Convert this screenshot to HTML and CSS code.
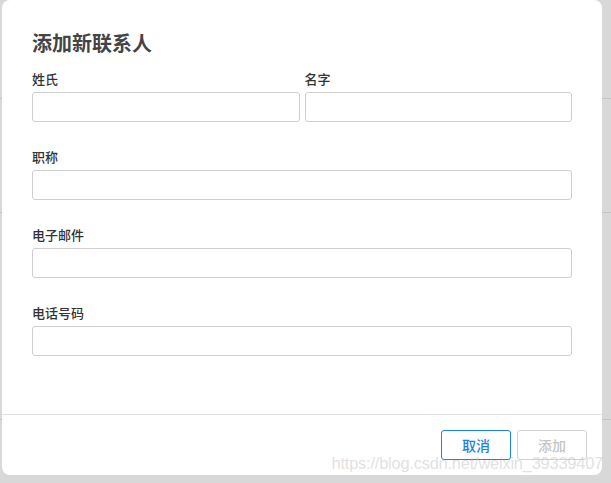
FILE: index.html
```html
<!DOCTYPE html>
<html lang="zh">
<head>
<meta charset="utf-8">
<link rel="stylesheet" href="styles.css">
</head>
<body>
<div class="backdrop">
  <div class="bg-row r1"></div>
  <div class="bg-row r2"></div>
  <div class="bg-row r3"></div>
</div>
<div class="modal">
  <div class="modal-body">
    <h2 class="title">添加新联系人</h2>
    <div class="row">
      <div class="field">
        <label class="label">姓氏</label>
        <input class="input" type="text">
      </div>
      <div class="field">
        <label class="label">名字</label>
        <input class="input" type="text">
      </div>
    </div>
    <div class="field group">
      <label class="label">职称</label>
      <input class="input" type="text">
    </div>
    <div class="field group">
      <label class="label">电子邮件</label>
      <input class="input" type="text">
    </div>
    <div class="field group">
      <label class="label">电话号码</label>
      <input class="input" type="text">
    </div>
  </div>
  <div class="modal-footer">
    <button class="btn btn-primary">取消</button>
    <button class="btn btn-disabled" disabled>添加</button>
  </div>
</div>
<div class="watermark">https://blog.csdn.net/weixin_39339407</div>
</body>
</html>
```
FILE: styles.css
```css
* { box-sizing: border-box; }
html, body {
  margin: 0;
  padding: 0;
  width: 611px;
  height: 483px;
  overflow: hidden;
  background: #d8d8d8;
  font-family: "Noto Sans CJK SC", "Noto Sans", sans-serif;
}
.backdrop {
  display: flex;
  flex-direction: column;
}
.bg-row { border-bottom: 1px solid #c4c4c4; }
.r1 { height: 99px; }
.r2 { height: 114px; }
.r3 { height: 207px; }

.modal {
  position: absolute;
  left: 2px;
  top: 0;
  width: 600px;
  height: 475px;
  background: #fff;
  border-radius: 8px;
  display: flex;
  flex-direction: column;
}
.modal-body {
  height: 414px;
  padding: 31px 30px 0 30px;
}
.title {
  margin: 0 0 17px 0;
  font-size: 20px;
  line-height: 24px;
  font-weight: 700;
  color: #444;
}
.row {
  display: flex;
  gap: 5px;
  margin-bottom: 28px;
}
.row .field { flex: 1; }
.field {
  display: flex;
  flex-direction: column;
}
.group { margin-bottom: 28px; }
.label {
  font-size: 13px;
  line-height: 14px;
  font-weight: 500;
  color: #333;
  margin-bottom: 6px;
}
.input {
  height: 30px;
  border: 1px solid #cfcfcf;
  border-radius: 3px;
  background: #fff;
  outline: none;
  padding: 0 8px;
  width: 100%;
}
.modal-footer {
  border-top: 1px solid #e2e2e2;
  height: 61px;
  display: flex;
  justify-content: flex-end;
  gap: 6px;
  padding: 15px 15px 0 0;
}
.btn {
  width: 70px;
  height: 30px;
  border-radius: 3px;
  background: #fff;
  font-family: "Noto Sans CJK SC", sans-serif;
  font-size: 14px;
  font-weight: 500;
  padding: 0;
}
.btn-primary {
  border: 1px solid #1a82f5;
  color: #1a7ff0;
}
.btn-disabled {
  border: 1px solid #d2d2d2;
  color: #c4c4c4;
}
.watermark {
  position: absolute;
  right: 8px;
  top: 453px;
  font-family: "Liberation Sans", sans-serif;
  font-size: 16.4px;
  line-height: 20px;
  color: rgba(200, 200, 200, 0.55);
  letter-spacing: -0.2px;
}
```
